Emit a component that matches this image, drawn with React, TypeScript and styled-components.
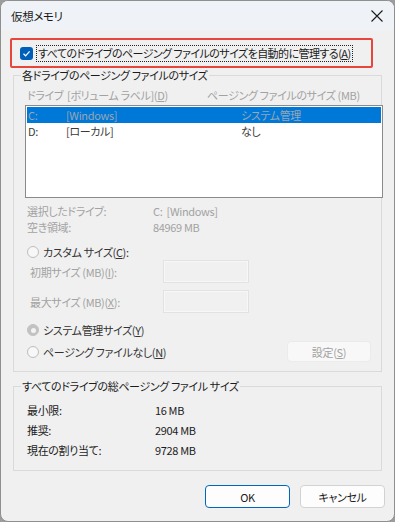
import React from "react";
import styled, { createGlobalStyle } from "styled-components";

const Global = createGlobalStyle`
  html, body { margin: 0; padding: 0; background: #9c9c9c; }
  body {
    font-family: "Noto Sans CJK JP", "Noto Sans", sans-serif;
    font-size: 11px;
    font-feature-settings: "palt";
    letter-spacing: -0.35px;
    color: #1b1b1b;
  }
  * { box-sizing: border-box; }
`;

const Window = styled.div`
  width: 395px;
  height: 522px;
  border: 1px solid #8f8f8f;
  border-radius: 8px;
  background: #f0f0f0;
  overflow: hidden;
  display: flex;
  flex-direction: column;
`;

const TitleBar = styled.div`
  height: 29px;
  background: #eff2f6;
  display: flex;
  align-items: center;
  justify-content: space-between;
  padding: 0 8px 0 10px;
  font-size: 11.5px;
  color: #1a1a1a;
`;

const CloseIcon = styled.svg`
  width: 14px;
  height: 14px;
  margin-right: 2px;
`;

const Body = styled.div`
  flex: 1;
  display: flex;
  flex-direction: column;
  padding: 8px 9px 0 9px;
`;

const Highlight = styled.div`
  width: 363px;
  height: 30px;
  border: 2px solid #e8453c;
  border-radius: 2px;
  display: flex;
  align-items: center;
  padding-left: 8px;
`;

const CheckBox = styled.span`
  width: 13px;
  height: 13px;
  border-radius: 3px;
  background: #005fb8;
  display: flex;
  align-items: center;
  justify-content: center;
  flex: none;
`;

const FocusLabel = styled.span`
  margin-left: 3px;
  border: 1px dotted #222;
  padding: 0 1px;
  line-height: 15px;
  letter-spacing: -0.55px;
  white-space: nowrap;
`;

const Group = styled.fieldset<{ $pb: number }>`
  margin: 0 3px;
  padding: 0 0 ${(p) => p.$pb}px 0;
  border: 1px solid #dadada;
  min-width: 0;
`;

const Legend = styled.legend`
  margin-left: 7px;
  padding: 0 1px;
  line-height: 14px;
  color: #1b1b1b;
`;

const GroupSpacer = styled.div`
  height: 7px;
`;

const Columns = styled.div`
  display: grid;
  grid-template-columns: 40px 140px 1fr;
  margin: 6px 0 0 13px;
  line-height: 14px;
  color: #a2a2a2;
  white-space: nowrap;
`;

const ListBox = styled.div`
  margin: 3px -2px 0 11px;
  height: 93px;
  border: 1px solid #8a8a8a;
  background: #ffffff;
  padding: 1px 1px 0 1px;
`;

const ListRow = styled.div<{ $selected?: boolean }>`
  display: grid;
  grid-template-columns: 38px 175px 1fr;
  height: 16px;
  line-height: 16px;
  padding-left: 1px;
  background: ${(p) => (p.$selected ? "#0078d7" : "transparent")};
  color: ${(p) => (p.$selected ? "#9aa6b4" : "#3a3a3a")};
  white-space: nowrap;
`;

const InfoRow = styled.div<{ $mt?: number }>`
  display: grid;
  grid-template-columns: 126px 1fr;
  margin: ${(p) => p.$mt ?? 0}px 0 0 13px;
  height: 16px;
  line-height: 16px;
  color: #a2a2a2;
  white-space: nowrap;
`;

const RadioRow = styled.div<{ $mt: number }>`
  display: flex;
  align-items: center;
  margin: ${(p) => p.$mt}px 0 0 13px;
  height: 16px;
  color: #333333;
  white-space: nowrap;
`;

const Radio = styled.span<{ $checked?: boolean }>`
  width: 12px;
  height: 12px;
  border-radius: 50%;
  border: 1px solid ${(p) => (p.$checked ? "#c2c2c2" : "#bdbdbd")};
  background: ${(p) => (p.$checked ? "#c2c2c2" : "#f7f7f7")};
  display: flex;
  align-items: center;
  justify-content: center;
  margin-right: 4px;
  flex: none;
  &::after {
    content: "";
    display: ${(p) => (p.$checked ? "block" : "none")};
    width: 5px;
    height: 5px;
    border-radius: 50%;
    background: #f3f3f3;
  }
`;

const SizeRow = styled.div<{ $mt: number }>`
  display: grid;
  grid-template-columns: 133px 86px;
  align-items: center;
  margin: ${(p) => p.$mt}px 0 0 16px;
  color: #a2a2a2;
  white-space: nowrap;
`;

const SizeInput = styled.div`
  height: 23px;
  border: 1px solid #e2e2e2;
  background: #f0f0f0;
  box-shadow: inset 0 0 0 1px #f7f7f7;
`;

const LastRow = styled.div`
  display: flex;
  align-items: center;
  justify-content: space-between;
  margin: 3px 10px 0 13px;
  height: 21px;
`;

const RadioLabel = styled.span`
  display: flex;
  align-items: center;
  color: #333333;
  white-space: nowrap;
`;

const SetButton = styled.div`
  width: 84px;
  height: 21px;
  border: 1px solid #ebebeb;
  border-radius: 4px;
  background: #f8f8f8;
  color: #a2a2a2;
  display: flex;
  align-items: center;
  justify-content: center;
`;

const TotalRow = styled.div<{ $mt?: number }>`
  display: grid;
  grid-template-columns: 128px 1fr;
  margin: ${(p) => p.$mt ?? 0}px 0 0 13px;
  height: 20px;
  line-height: 20px;
  color: #1b1b1b;
  white-space: nowrap;
`;

const ButtonBar = styled.div`
  display: flex;
  justify-content: flex-end;
  gap: 10px;
  margin-top: 14px;
`;

const DialogButton = styled.div<{ $primary?: boolean }>`
  width: 85px;
  height: 23px;
  border: 1px solid ${(p) => (p.$primary ? "#0067c0" : "#d2d2d2")};
  border-radius: 4px;
  background: #fdfdfd;
  display: flex;
  align-items: center;
  justify-content: center;
  color: #1b1b1b;
`;

export default function App() {
  return (
    <>
      <Global />
      <Window>
        <TitleBar>
          <span>仮想メモリ</span>
          <CloseIcon viewBox="0 0 14 14">
            <path d="M1.5 1.5 L12.5 12.5 M12.5 1.5 L1.5 12.5" stroke="#1b1b1b" strokeWidth="1.1" fill="none" />
          </CloseIcon>
        </TitleBar>
        <Body>
          <Highlight>
            <CheckBox>
              <svg width="9" height="9" viewBox="0 0 9 9">
                <path d="M1.5 4.8 L3.6 6.8 L7.6 2.3" stroke="#fff" strokeWidth="1.2" fill="none" />
              </svg>
            </CheckBox>
            <FocusLabel>
              すべてのドライブのページング ファイルのサイズを自動的に管理する(<u>A</u>)
            </FocusLabel>
          </Highlight>
          <Group $pb={9}>
            <Legend>各ドライブのページング ファイルのサイズ</Legend>
            <Columns>
              <span>ドライブ</span>
              <span>
                [ボリューム ラベル](<u>D</u>)
              </span>
              <span>ページング ファイルのサイズ (MB)</span>
            </Columns>
            <ListBox>
              <ListRow $selected>
                <span>C:</span>
                <span>[Windows]</span>
                <span>システム管理</span>
              </ListRow>
              <ListRow>
                <span>D:</span>
                <span>[ローカル]</span>
                <span>なし</span>
              </ListRow>
            </ListBox>
            <InfoRow $mt={5}>
              <span>選択したドライブ:</span>
              <span>C:&nbsp;&nbsp;[Windows]</span>
            </InfoRow>
            <InfoRow>
              <span>空き領域:</span>
              <span>84969 MB</span>
            </InfoRow>
            <RadioRow $mt={9}>
              <Radio />
              カスタム サイズ(<u>C</u>):
            </RadioRow>
            <SizeRow $mt={0}>
              <span>
                初期サイズ (MB)(<u>I</u>):
              </span>
              <SizeInput />
            </SizeRow>
            <SizeRow $mt={7}>
              <span>
                最大サイズ (MB)(<u>X</u>):
              </span>
              <SizeInput />
            </SizeRow>
            <RadioRow $mt={9}>
              <Radio $checked />
              システム管理サイズ(<u>Y</u>)
            </RadioRow>
            <LastRow>
              <RadioLabel>
                <Radio />
                ページング ファイルなし(<u>N</u>)
              </RadioLabel>
              <SetButton>
                設定(<u>S</u>)
              </SetButton>
            </LastRow>
          </Group>
          <GroupSpacer />
          <Group $pb={10}>
            <Legend>すべてのドライブの総ページング ファイル サイズ</Legend>
            <TotalRow $mt={7}>
              <span>最小限:</span>
              <span>16 MB</span>
            </TotalRow>
            <TotalRow>
              <span>推奨:</span>
              <span>2904 MB</span>
            </TotalRow>
            <TotalRow>
              <span>現在の割り当て:</span>
              <span>9728 MB</span>
            </TotalRow>
          </Group>
          <ButtonBar>
            <DialogButton $primary>OK</DialogButton>
            <DialogButton>キャンセル</DialogButton>
          </ButtonBar>
        </Body>
      </Window>
    </>
  );
}
